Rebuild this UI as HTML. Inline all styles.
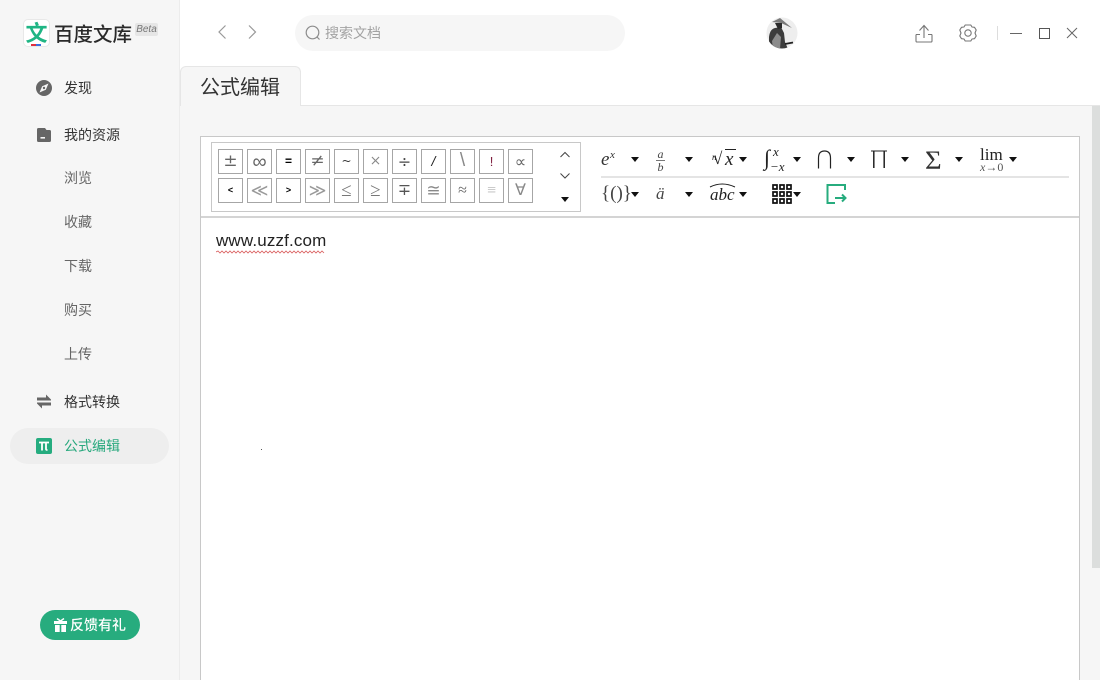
<!DOCTYPE html>
<html lang="zh"><head><meta charset="utf-8"><title>百度文库</title>
<style>
html,body{margin:0;padding:0;width:1100px;height:680px;overflow:hidden;background:#fff;font-family:"Liberation Sans","Noto Sans CJK SC",sans-serif;}
#app{position:relative;width:1100px;height:680px;overflow:hidden;}
.a{position:absolute;white-space:nowrap;}
#side{left:0;top:0;width:179px;height:680px;background:#f6f6f6;border-right:1px solid #ececec;}
.n{font-size:14px;line-height:20px;color:#333;left:64px;}
.s{color:#666;}
.c{position:absolute;width:23px;height:23px;border:1px solid #a6a6a6;background:#fff;text-align:center;font:15px/23px "DejaVu Serif","Liberation Serif",serif;font-weight:200;color:#666;overflow:hidden;}
.t{position:absolute;width:0;height:0;border-left:4.5px solid transparent;border-right:4.5px solid transparent;border-top:5px solid #111;}
.m{position:absolute;white-space:nowrap;font-family:"Liberation Serif",serif;color:#222;}
</style></head><body><div id="app">
<div class="a" id="side"></div>

<!-- logo -->
<div class="a" style="left:23px;top:19px;width:25px;height:26px;background:#fff;border:1px solid #e8e8e8;border-radius:5px;"></div>
<div class="a" style="left:23px;top:19px;width:27px;text-align:center;font:bold 22px/27px 'Noto Sans CJK SC',sans-serif;color:#1fb584;">文</div>
<div class="a" style="left:31px;top:44px;width:5px;height:2px;background:#e0303f;"></div>
<div class="a" style="left:36px;top:44px;width:5px;height:2px;background:#3a6fe0;"></div>
<div class="a" style="left:54px;top:20px;font:500 19.5px/26px 'Noto Sans CJK SC',sans-serif;color:#2a2a2a;">百度文库</div>
<div class="a" style="left:135px;top:23px;width:23px;height:13px;background:#e6e6e6;border-radius:2px;font:italic 10px/13px 'Liberation Sans',sans-serif;color:#777;text-align:center;">Beta</div>

<!-- nav -->
<svg class="a" style="left:36px;top:80px" width="16" height="16" viewBox="0 0 16 16"><circle cx="8" cy="8" r="8" fill="#666"/><path d="M12.500 3.500 9.800 9.800 3.500 12.500 6.200 6.200Z" fill="#f6f6f6"/><circle cx="8" cy="8" r="1.200" fill="#666"/></svg>
<div class="a n" style="top:78px">发现</div>
<svg class="a" style="left:37px;top:128px" width="14" height="14" viewBox="0 0 14 14"><path d="M1.500 0H8L9.500 2H12.500Q14 2 14 3.500V12.500Q14 14 12.500 14H1.500Q0 14 0 12.500V1.500Q0 0 1.500 0Z" fill="#666"/><rect x="3.500" y="9" width="4.500" height="1.600" fill="#f6f6f6"/></svg>
<div class="a n" style="top:125px">我的资源</div>
<div class="a n s" style="top:168px">浏览</div>
<div class="a n s" style="top:212px">收藏</div>
<div class="a n s" style="top:256px">下载</div>
<div class="a n s" style="top:300px">购买</div>
<div class="a n s" style="top:344px">上传</div>
<svg class="a" style="left:37px;top:394px" width="14" height="15" viewBox="0 0 14 15" fill="#666"><path d="M0 3.500H9V0.500L14 5.500V6.500H0Z"/><path d="M14 8.500V11.500H5V14.500L0 9.500V8.500Z"/></svg>
<div class="a n" style="top:392px">格式转换</div>
<div class="a" style="left:10px;top:428px;width:159px;height:36px;border-radius:18px;background:#eeeeee;"></div>
<div class="a" style="left:36px;top:438px;width:16px;height:16px;border-radius:2px;background:#25ac7f;"></div>
<svg class="a" style="left:36px;top:438px" width="16" height="16" viewBox="0 0 16 16" fill="none" stroke="#fff" stroke-width="1.800"><path d="M3 4.500H13M6 4.500V12.500M10 4.500V11Q10 12 11.500 12"/></svg>
<div class="a n" style="top:436px;color:#27a87d">公式编辑</div>
<div class="a" style="left:40px;top:610px;width:100px;height:30px;border-radius:15px;background:#27ac7e;"></div>
<svg class="a" style="left:54px;top:618px" width="13" height="14" viewBox="0 0 13 14" fill="#fff"><rect x="0" y="3" width="13" height="3"/><rect x="1" y="7" width="4.700" height="7"/><rect x="7.300" y="7" width="4.700" height="7"/><path d="M6.500 3 3 0.500M6.500 3 10 0.500" stroke="#fff" stroke-width="1.400" fill="none"/></svg>
<div class="a" style="left:70px;top:615px;font-size:14px;line-height:20px;color:#fff;font-weight:500;">反馈有礼</div>

<!-- top bar -->
<svg class="a" style="left:216px;top:24px" width="44" height="16" viewBox="0 0 44 16" fill="none" stroke="#999" stroke-width="1.200"><path d="M9.500 1.500 3 8l6.500 6.500M33 1.500 39.500 8 33 14.500"/></svg>
<div class="a" style="left:295px;top:15px;width:330px;height:36px;border-radius:18px;background:#f6f6f6;"></div>
<svg class="a" style="left:305px;top:25px" width="16" height="16" viewBox="0 0 16 16" fill="none" stroke="#8c8c8c" stroke-width="1.200"><circle cx="7.500" cy="7.500" r="6.300"/><path d="M12 12l2.500 2.500"/></svg>
<div class="a" style="left:325px;top:23px;font-size:14px;line-height:20px;color:#a3a3a3;">搜索文档</div>

<!-- avatar -->
<svg class="a" style="left:766px;top:17px" width="32" height="32" viewBox="0 0 32 32"><defs><clipPath id="av"><circle cx="16" cy="16" r="15.500"/></clipPath></defs><g clip-path="url(#av)"><rect width="32" height="32" fill="#eeeeee"/><path d="M3 32V20Q4 12 9 11L15 10 18 16 19 25 22 32Z" fill="#3c3c3c"/><path d="M6 24 11 16 15 20 14 32H7Z" fill="#8c8c8c"/><path d="M6 5 14 1 26 11 15 6Z" fill="#7a7a7a"/><path d="M9 6H16V11L12 12Z" fill="#2a2a2a"/><path d="M19 27l8-1.500" stroke="#222" stroke-width="1.800"/></g></svg>

<!-- top right icons -->
<svg class="a" style="left:915px;top:24px" width="18" height="19" viewBox="0 0 18 19" fill="none" stroke="#777" stroke-width="1.100"><path d="M9 14V2M4.500 6.500 9 1.500l4.500 5M1 10.500V17Q1 18 2 18H16Q17 18 17 17V10.500M1 10.500H5M13 10.500H17"/></svg>
<svg class="a" style="left:959px;top:24px" width="18" height="18" viewBox="0 0 18 18" fill="none" stroke="#777" stroke-width="1.100"><path d="M6.200 1 H11.800L13 3 15.500 3.300 17.200 6 16 9 17.200 12 15.500 14.700 13 15 11.800 17H6.200L5 15 2.500 14.700 .8 12 2 9 .8 6 2.500 3.300 5 3Z" stroke-linejoin="round"/><circle cx="9" cy="9" r="3.200"/></svg>
<div class="a" style="left:997px;top:26px;width:1px;height:14px;background:#ddd;"></div>
<div class="a" style="left:1010px;top:33px;width:12px;height:1px;background:#666;"></div>
<div class="a" style="left:1039px;top:28px;width:9px;height:9px;border:1px solid #555;"></div>
<svg class="a" style="left:1066px;top:27px" width="12" height="12" viewBox="0 0 12 12" stroke="#666" stroke-width="1" fill="none"><path d="M1 1l10 10M11 1 1 11"/></svg>

<!-- content area -->
<div class="a" style="left:180px;top:105px;width:920px;height:575px;background:#f6f6f6;border-top:1px solid #e6e6e6;box-sizing:border-box;"></div>
<div class="a" style="left:180px;top:66px;width:121px;height:40px;box-sizing:border-box;background:#f6f6f6;border:1px solid #e6e6e6;border-bottom:none;border-radius:6px 6px 0 0;"></div>
<div class="a" style="left:200px;top:74px;font-size:20px;line-height:28px;color:#333;">公式编辑</div>
<div class="a" style="left:1092px;top:106px;width:8px;height:462px;background:#dcdedd;"></div>

<!-- editor -->
<div class="a" style="left:200px;top:136px;width:878px;height:544px;background:#fff;border:1px solid #c8c8c8;border-bottom:none;"></div>
<div class="a" style="left:201px;top:216px;width:878px;height:2px;background:#d4d4d4;"></div>
<div class="a" style="left:211px;top:142px;width:368px;height:68px;border:1px solid #c8c8c8;"></div>

<div class="c" style="left:218px;top:149px;font-size:17px">±</div>
<div class="c" style="left:247px;top:149px;font-size:20px;font-family:'DejaVu Sans',sans-serif">∞</div>
<div class="c" style="left:276px;top:149px;color:#000;font:bold 12px/23px 'Liberation Sans',sans-serif">=</div>
<div class="c" style="left:305px;top:149px;font-size:17px">≠</div>
<div class="c" style="left:334px;top:149px;font-size:12px;color:#333">~</div>
<div class="c" style="left:363px;top:149px;color:#888;font-size:14px">×</div>
<div class="c" style="left:392px;top:149px;font-size:16px;color:#444">÷</div>
<div class="c" style="left:421px;top:149px;font:italic 14px/23px 'Liberation Sans',sans-serif;color:#222">/</div>
<div class="c" style="left:450px;top:149px;font:19px/22px 'Liberation Sans',sans-serif;color:#888">\</div>
<div class="c" style="left:479px;top:149px;color:#802040;font:13px/23px 'Liberation Sans',sans-serif">!</div>
<div class="c" style="left:508px;top:149px;font-size:16px;font-family:'DejaVu Sans',sans-serif">∝</div>
<div class="c" style="left:218px;top:178px;color:#000;font:bold 9px/22px 'Liberation Sans',sans-serif">&lt;</div>
<div class="c" style="left:247px;top:178px;font-size:17px;color:#999;font-family:'Liberation Serif',serif">≪</div>
<div class="c" style="left:276px;top:178px;color:#000;font:bold 9px/22px 'Liberation Sans',sans-serif">&gt;</div>
<div class="c" style="left:305px;top:178px;font-size:17px;color:#999;font-family:'Liberation Serif',serif">≫</div>
<div class="c" style="left:334px;top:178px;font-size:19px;color:#777;font-family:'Liberation Serif',serif">≤</div>
<div class="c" style="left:363px;top:178px;font-size:19px;color:#777;font-family:'Liberation Serif',serif">≥</div>
<div class="c" style="left:392px;top:178px;font-size:16px;color:#555;font-family:'Liberation Serif',serif">∓</div>
<div class="c" style="left:421px;top:178px;font-size:17px;color:#888;font-family:'Liberation Serif',serif">≅</div>
<div class="c" style="left:450px;top:178px;font-size:16px;color:#666;font-family:'Liberation Serif',serif">≈</div>
<div class="c" style="left:479px;top:178px;font-size:16px;color:#bbb;font-family:'Liberation Serif',serif">≡</div>
<div class="c" style="left:508px;top:178px;font-size:16px;color:#888;font-family:'Liberation Serif',serif">∀</div>

<svg class="a" style="left:559px;top:150px" width="12" height="32" viewBox="0 0 12 32" fill="none" stroke="#444" stroke-width="1"><path d="M1.500 7 6 2.500 10.500 7M1.500 23.500 6 28 10.500 23.500"/></svg>
<div class="t" style="left:561px;top:197px"></div>

<!-- right tools -->
<div class="a" style="left:601px;top:176px;width:468px;height:2px;background:#e4e4e4;"></div>
<div class="m" style="left:601px;top:151px;font-size:19px;line-height:18px;font-style:italic;color:#333">e<span style="position:absolute;left:9px;top:-5px;font-size:11px">x</span></div>
<div class="t" style="left:631px;top:157px"></div>
<div class="m" style="left:656px;top:148px;width:9px;text-align:center;font-size:12px;line-height:12px;font-style:italic;color:#444">a<div style="border-top:1px solid #777;line-height:12px">b</div></div>
<div class="t" style="left:685px;top:157px"></div>
<div class="m" style="left:711px;top:149px;font-size:19px;line-height:20px;font-style:italic"><span style="position:absolute;left:1px;top:-2px;font-size:9px">n</span><span style="font-style:normal;margin-left:2px;font-size:17px">√</span><span style="position:absolute;left:14px;top:0;border-top:1px solid #222;width:11px;line-height:19px">x</span></div>
<div class="t" style="left:739px;top:157px"></div>
<div class="m" style="left:764px;top:146px;font-size:22px;line-height:24px">∫<i style="position:absolute;left:9px;top:-6px;font-size:13px">x</i><i style="position:absolute;left:6px;top:9px;font-size:13px">−x</i></div>
<div class="t" style="left:793px;top:157px"></div>
<svg class="a" style="left:817px;top:150px" width="15" height="19" viewBox="0 0 15 19" fill="none" stroke="#222" stroke-width="1.200"><path d="M1.500 18.500V8Q1.500 1 7.500 1T13.500 8V18.500"/></svg>
<div class="t" style="left:847px;top:157px"></div>
<svg class="a" style="left:871px;top:150px" width="16" height="18" viewBox="0 0 16 18" fill="none" stroke="#222"><path d="M0 1H16" stroke-width="1"/><path d="M2.800 1V18M13.200 1V18" stroke-width="1.500"/></svg>
<div class="t" style="left:901px;top:157px"></div>
<div class="m" style="left:925px;top:145px;font-size:26px;line-height:32px;color:#333;transform:scaleX(1.100);transform-origin:left;">Σ</div>
<div class="t" style="left:955px;top:157px"></div>
<div class="m" style="left:980px;top:146px;font-size:17px;line-height:18px;">lim</div>
<div class="m" style="left:980px;top:161px;font-size:12px;line-height:12px;color:#555"><i>x</i>→0</div>
<div class="t" style="left:1009px;top:157px"></div>

<div class="m" style="left:601px;top:182px;font-size:19px;line-height:24px;color:#444">{()}</div>
<div class="t" style="left:631px;top:192px"></div>
<div class="m" style="left:656px;top:185px;font-size:17px;line-height:18px;font-style:italic;color:#444">ä</div>
<div class="t" style="left:685px;top:192px"></div>
<div class="m" style="left:710px;top:186px;font-size:17px;line-height:18px;font-style:italic">abc</div>
<svg class="a" style="left:709px;top:182px" width="27" height="6" viewBox="0 0 27 6" fill="none" stroke="#222"><path d="M1 5Q13 -1 26 5"/></svg>
<div class="t" style="left:739px;top:192px"></div>
<svg class="a" style="left:772px;top:184px" width="20" height="20" viewBox="0 0 20 20" fill="none" stroke="#111" stroke-width="1.700"><path d="M1 1h4v4H1zM8 1h4v4H8zM15 1h4v4h-4zM1 8h4v4H1zM8 8h4v4H8zM15 8h4v4h-4zM1 15h4v4H1zM8 15h4v4H8zM15 15h4v4h-4z"/></svg>
<div class="t" style="left:793px;top:192px"></div>
<svg class="a" style="left:826px;top:183px" width="21" height="21" viewBox="0 0 21 21" fill="none" stroke="#27ac7e" stroke-width="2"><path d="M19 7V2H1.500V20H9"/><path d="M9 15H19.500M16 11.500 19.500 15 16 18.500"/></svg>

<!-- text -->
<div class="a" style="left:216px;top:231px;font-size:17px;line-height:20px;letter-spacing:.15px;color:#222;">www.uzzf.com</div>
<svg class="a" style="left:216px;top:250px" width="110" height="4" viewBox="0 0 110 4" fill="none" stroke="#d85a5a" stroke-width=".8"><path d="M0 2l2-1 2 2 2-2 2 2 2-2 2 2 2-2 2 2 2-2 2 2 2-2 2 2 2-2 2 2 2-2 2 2 2-2 2 2 2-2 2 2 2-2 2 2 2-2 2 2 2-2 2 2 2-2 2 2 2-2 2 2 2-2 2 2 2-2 2 2 2-2 2 2 2-2 2 2 2-2 2 2 2-2 2 2 2-2 2 2 2-2 2 2 2-2 2 2 2-2 2 2 2-2 2 2 2-2 2 2"/></svg>
<div class="a" style="left:261px;top:449px;width:1px;height:1px;background:#555;"></div>
</div></body></html>
